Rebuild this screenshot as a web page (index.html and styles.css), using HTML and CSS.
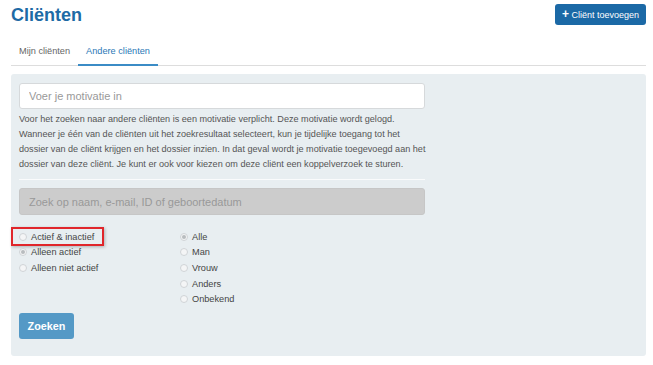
FILE: index.html
```html
<!DOCTYPE html>
<html lang="nl">
<head>
  <meta charset="UTF-8" />
  <title>Cliënten</title>
  <link rel="stylesheet" href="styles.css">
</head>
<body>

<div class="page">
  <div class="page-header">
    <h1>Cliënten</h1>
    <button class="btn-add"><span class="plus">+</span> Cliënt toevoegen</button>
  </div>

  <ul class="tabs">
    <li>Mijn cliënten</li>
    <li class="active">Andere cliënten</li>
  </ul>

  <div class="search-panel">
    <div class="panel-col">
      <input class="field" type="text" placeholder="Voer je motivatie in" />
      <p class="help">Voor het zoeken naar andere cliënten is een motivatie verplicht. Deze motivatie wordt gelogd.<br>Wanneer je één van de cliënten uit het zoekresultaat selecteert, kun je tijdelijke toegang tot het dossier van de cliënt krijgen en het dossier inzien. In dat geval wordt je motivatie toegevoegd aan het dossier van deze cliënt. Je kunt er ook voor kiezen om deze cliënt een koppelverzoek te sturen.</p>
      <hr />
      <input class="field disabled" type="text" placeholder="Zoek op naam, e-mail, ID of geboortedatum" disabled />

      <div class="filters">
        <div class="radio-group">
          <label class="radio highlight"><span class="dot"></span>Actief &amp; inactief</label>
          <label class="radio"><span class="dot checked"></span>Alleen actief</label>
          <label class="radio"><span class="dot"></span>Alleen niet actief</label>
        </div>
        <div class="radio-group">
          <label class="radio"><span class="dot checked"></span>Alle</label>
          <label class="radio"><span class="dot"></span>Man</label>
          <label class="radio"><span class="dot"></span>Vrouw</label>
          <label class="radio"><span class="dot"></span>Anders</label>
          <label class="radio"><span class="dot"></span>Onbekend</label>
        </div>
      </div>

      <button class="btn-search">Zoeken</button>
    </div>
  </div>
</div>

</body>
</html>
```

FILE: styles.css
```css
body {
  margin: 0;
  background: #fff;
  font-family: 'Liberation Sans', Arial, sans-serif;
  color: #333;
}

.page {
  padding: 4px 7px 0 11px;
}

.page-header {
  display: flex;
  justify-content: space-between;
  align-items: flex-start;
}

.page-header h1 {
  margin: 0;
  font-size: 18px;
  line-height: 22px;
  color: #1d6aa5;
}

.btn-add {
  background: #1b69a6;
  color: #fff;
  border: none;
  border-radius: 3px;
  height: 21px;
  padding: 0 7px;
  font-family: inherit;
  font-size: 9px;
}

.btn-add .plus {
  font-weight: bold;
  font-size: 12px;
  line-height: 10px;
}

.tabs {
  display: flex;
  list-style: none;
  margin: 15px 0 0;
  padding: 0;
  border-bottom: 1px solid #ddd;
}

.tabs li {
  padding: 4px 8px 7px;
  font-size: 9.2px;
  line-height: 12px;
  color: #666;
  margin-bottom: -1px;
  border-bottom: 2px solid transparent;
}

.tabs li.active {
  color: #2a78b6;
  border-bottom-color: #3b8cc6;
}

.search-panel {
  margin-top: 8px;
  background: #e8eef1;
  border-radius: 3px;
  padding: 9px 8px 17px;
}

.panel-col {
  width: 406px;
}

.field {
  display: block;
  box-sizing: border-box;
  width: 100%;
  height: 26px;
  padding: 0 9px;
  border: 1px solid #d6d9db;
  border-radius: 3px;
  background: #fff;
  font-family: inherit;
  font-size: 11px;
  color: #333;
}

.field::placeholder {
  color: #999;
}

.field.disabled {
  height: 27px;
  background: #cccccc;
  border-color: #c6c6c6;
}

.field.disabled::placeholder {
  color: #999;
}

.help {
  margin: 3px -6px 0 0;
  font-size: 9.1px;
  line-height: 15px;
  color: #555;
}

hr {
  border: none;
  border-top: 1px solid #fafbfc;
  margin: 7px 0 8px;
}

.filters {
  display: flex;
  margin-top: 14px;
}

.radio-group {
  display: flex;
  flex-direction: column;
  width: 161px;
}

.radio {
  display: flex;
  align-items: center;
  height: 15.6px;
  font-size: 9.2px;
  color: #444;
}

.dot {
  box-sizing: border-box;
  width: 8px;
  height: 8px;
  border: 1px solid #d0d4d7;
  border-radius: 50%;
  background: #f4f5f6;
  margin-right: 4px;
  position: relative;
}

.dot.checked::after {
  content: "";
  position: absolute;
  left: 1px;
  top: 1px;
  width: 4px;
  height: 4px;
  border-radius: 50%;
  background: #b8bcbf;
}

.radio.highlight {
  position: relative;
}

.radio.highlight::before {
  content: "";
  position: absolute;
  left: -8px;
  top: -2px;
  width: 89px;
  height: 15px;
  border: 2px solid #e0262b;
  box-shadow: 1px 1px 3px rgba(0, 0, 0, 0.25);
}

.btn-search {
  margin-top: 6px;
  background: #5499c6;
  color: #fff;
  border: none;
  border-radius: 3px;
  width: 55px;
  height: 26px;
  font-family: inherit;
  font-size: 10.8px;
  font-weight: bold;
}
```
